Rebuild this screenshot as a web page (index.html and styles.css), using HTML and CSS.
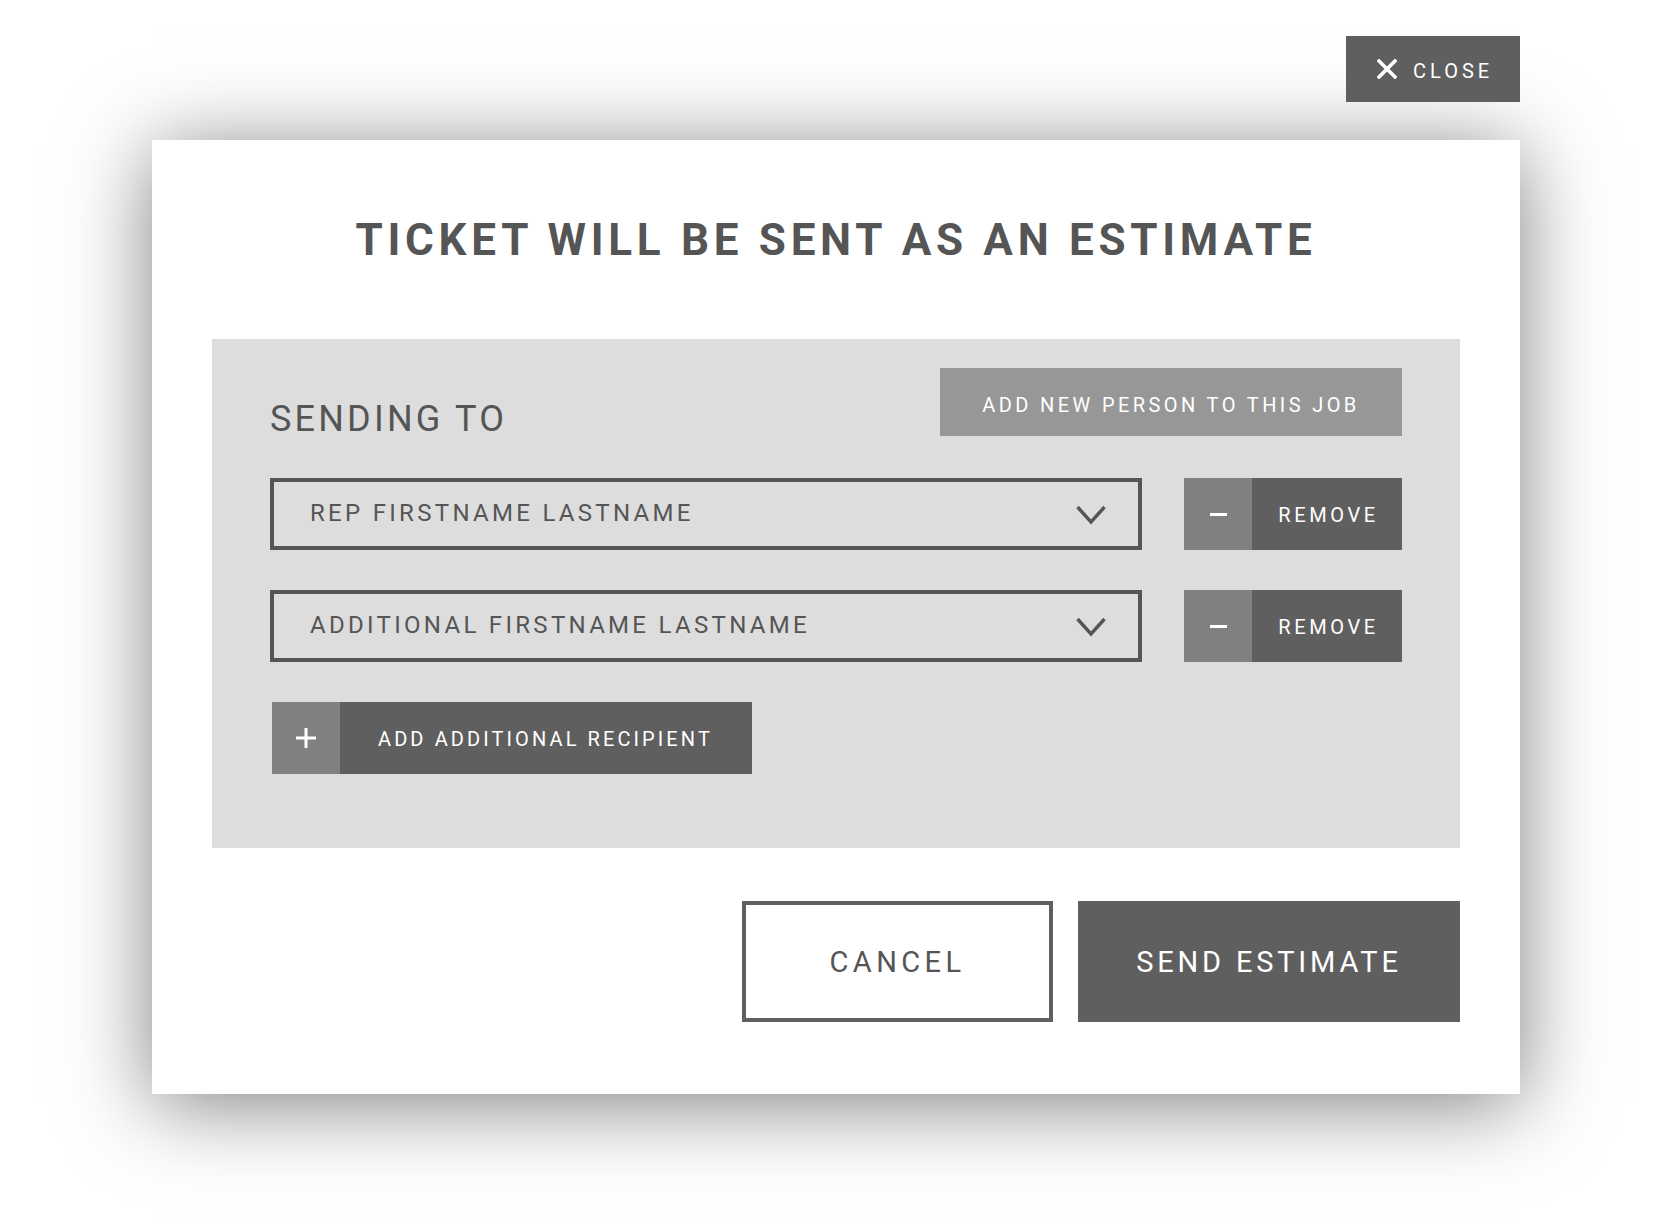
FILE: index.html
```html
<!DOCTYPE html>
<html lang="en">
<head>
<meta charset="utf-8">
<title>Ticket will be sent as an estimate</title>
<link rel="stylesheet" href="styles.css">
</head>
<body>
<div class="page">
  <div class="topbar">
    <button class="close-btn" type="button">
      <svg class="close-icon" width="20" height="20" viewBox="0 0 20 20" aria-hidden="true">
        <path d="M2 2 L18 18 M18 2 L2 18" stroke="#ffffff" stroke-width="3.6" stroke-linecap="square" fill="none"/>
      </svg>
      <span class="close-label">CLOSE</span>
    </button>
  </div>

  <div class="modal">
    <h1 class="modal-title">TICKET WILL BE SENT AS AN ESTIMATE</h1>

    <div class="panel">
      <div class="panel-head">
        <div class="panel-label">SENDING TO</div>
        <button class="btn-add-person" type="button">ADD NEW PERSON TO THIS JOB</button>
      </div>

      <div class="recipient-row">
        <div class="select">
          <span class="select-text">REP FIRSTNAME LASTNAME</span>
          <svg class="chevron" width="30" height="20" viewBox="0 0 30 20" aria-hidden="true">
            <polyline points="1.5,2 15,17 28.5,2" fill="none" stroke="#555555" stroke-width="3.4"/>
          </svg>
        </div>
        <button class="btn-remove" type="button">
          <span class="btn-remove-icon"><span class="minus"></span></span>
          <span class="btn-remove-label">REMOVE</span>
        </button>
      </div>

      <div class="recipient-row">
        <div class="select">
          <span class="select-text">ADDITIONAL FIRSTNAME LASTNAME</span>
          <svg class="chevron" width="30" height="20" viewBox="0 0 30 20" aria-hidden="true">
            <polyline points="1.5,2 15,17 28.5,2" fill="none" stroke="#555555" stroke-width="3.4"/>
          </svg>
        </div>
        <button class="btn-remove" type="button">
          <span class="btn-remove-icon"><span class="minus"></span></span>
          <span class="btn-remove-label">REMOVE</span>
        </button>
      </div>

      <div class="add-row">
        <button class="btn-add-recipient" type="button">
          <span class="btn-add-icon">
            <svg width="22" height="22" viewBox="0 0 22 22" aria-hidden="true">
              <path d="M11 1 V21 M1 11 H21" stroke="#ffffff" stroke-width="3" fill="none"/>
            </svg>
          </span>
          <span class="btn-add-label">ADD ADDITIONAL RECIPIENT</span>
        </button>
      </div>
    </div>

    <div class="modal-actions">
      <button class="btn-cancel" type="button">CANCEL</button>
      <button class="btn-send" type="button">SEND ESTIMATE</button>
    </div>
  </div>
</div>
</body>
</html>
```

FILE: styles.css
```css
* {
  box-sizing: border-box;
}

html, body {
  margin: 0;
  padding: 0;
  background: #ffffff;
}

body {
  font-family: Roboto, "Noto Sans", "Liberation Sans", sans-serif;
  color: #555555;
  width: 1670px;
  height: 1230px;
  overflow: hidden;
}

button {
  font-family: inherit;
  border: 0;
  margin: 0;
  padding: 0;
  cursor: pointer;
}

.page {
  padding: 36px 0 0 152px;
  width: 1520px;
}

.topbar {
  display: flex;
  justify-content: flex-end;
  margin-bottom: 38px;
}

.close-btn {
  display: flex;
  align-items: center;
  width: 174px;
  height: 66px;
  padding-left: 31px;
  gap: 16px;
  background: #5f5f5f;
  color: #ffffff;
  font-size: 20px;
  letter-spacing: 4px;
  font-weight: 400;
}

.close-icon {
  display: block;
  flex: none;
}

.close-label {
  padding-top: 3px;
}

.modal {
  width: 1368px;
  height: 954px;
  background: #ffffff;
  box-shadow: 0 10px 80px rgba(0, 0, 0, 0.5);
  padding: 70px 60px 73px 60px;
  display: flex;
  flex-direction: column;
}

.modal-title {
  margin: 0;
  height: 60px;
  line-height: 60px;
  text-align: center;
  font-size: 44px;
  font-weight: 700;
  letter-spacing: 4.7px;
  color: #555555;
}

.panel {
  margin-top: 69px;
  background: #dddddd;
  padding: 29px 58px 74px 58px;
}

.panel-head {
  display: flex;
  justify-content: space-between;
  align-items: flex-end;
}

.panel-label {
  font-size: 36px;
  line-height: 36px;
  letter-spacing: 3.2px;
  color: #555555;
  position: relative;
  top: 1px;
}

.btn-add-person {
  width: 462px;
  height: 68px;
  background: #979797;
  color: #ffffff;
  font-size: 20px;
  letter-spacing: 3.4px;
  padding-top: 5px;
}

.recipient-row {
  display: flex;
  gap: 42px;
  margin-top: 40px;
}

.panel-head + .recipient-row {
  margin-top: 42px;
}

.select {
  width: 872px;
  height: 72px;
  border: 4px solid #555555;
  display: flex;
  align-items: center;
  justify-content: space-between;
  padding: 0 32px 2px 36px;
}

.select-text {
  font-size: 24px;
  letter-spacing: 3.3px;
  color: #555555;
}

.chevron {
  display: block;
  flex: none;
  margin-top: 4px;
}

.btn-remove {
  display: flex;
  width: 218px;
  height: 72px;
  background: #5f5f5f;
  color: #ffffff;
}

.btn-remove-icon {
  width: 68px;
  height: 100%;
  background: #808080;
  display: flex;
  align-items: center;
  justify-content: center;
}

.minus {
  display: block;
  width: 17px;
  height: 3px;
  background: #ffffff;
}

.btn-remove-label {
  flex: 1;
  display: flex;
  align-items: center;
  justify-content: center;
  font-size: 20px;
  letter-spacing: 3.6px;
  padding-left: 3px;
  padding-top: 2px;
}

.add-row {
  margin-top: 40px;
  padding-left: 2px;
}

.btn-add-recipient {
  display: flex;
  width: 480px;
  height: 72px;
  background: #5f5f5f;
  color: #ffffff;
}

.btn-add-icon {
  width: 68px;
  height: 100%;
  background: #808080;
  display: flex;
  align-items: center;
  justify-content: center;
}

.btn-add-icon svg {
  display: block;
}

.btn-add-label {
  flex: 1;
  display: flex;
  align-items: center;
  padding-left: 38px;
  padding-top: 2px;
  font-size: 20px;
  letter-spacing: 3.1px;
}

.modal-actions {
  margin-top: 53px;
  display: flex;
  justify-content: flex-end;
  gap: 25px;
}

.btn-cancel {
  width: 311px;
  height: 121px;
  background: #ffffff;
  border: 4px solid #5f5f5f;
  color: #555555;
  font-size: 29px;
  letter-spacing: 4.4px;
}

.btn-send {
  width: 382px;
  height: 121px;
  background: #5f5f5f;
  color: #ffffff;
  font-size: 29px;
  letter-spacing: 3.8px;
}
```
